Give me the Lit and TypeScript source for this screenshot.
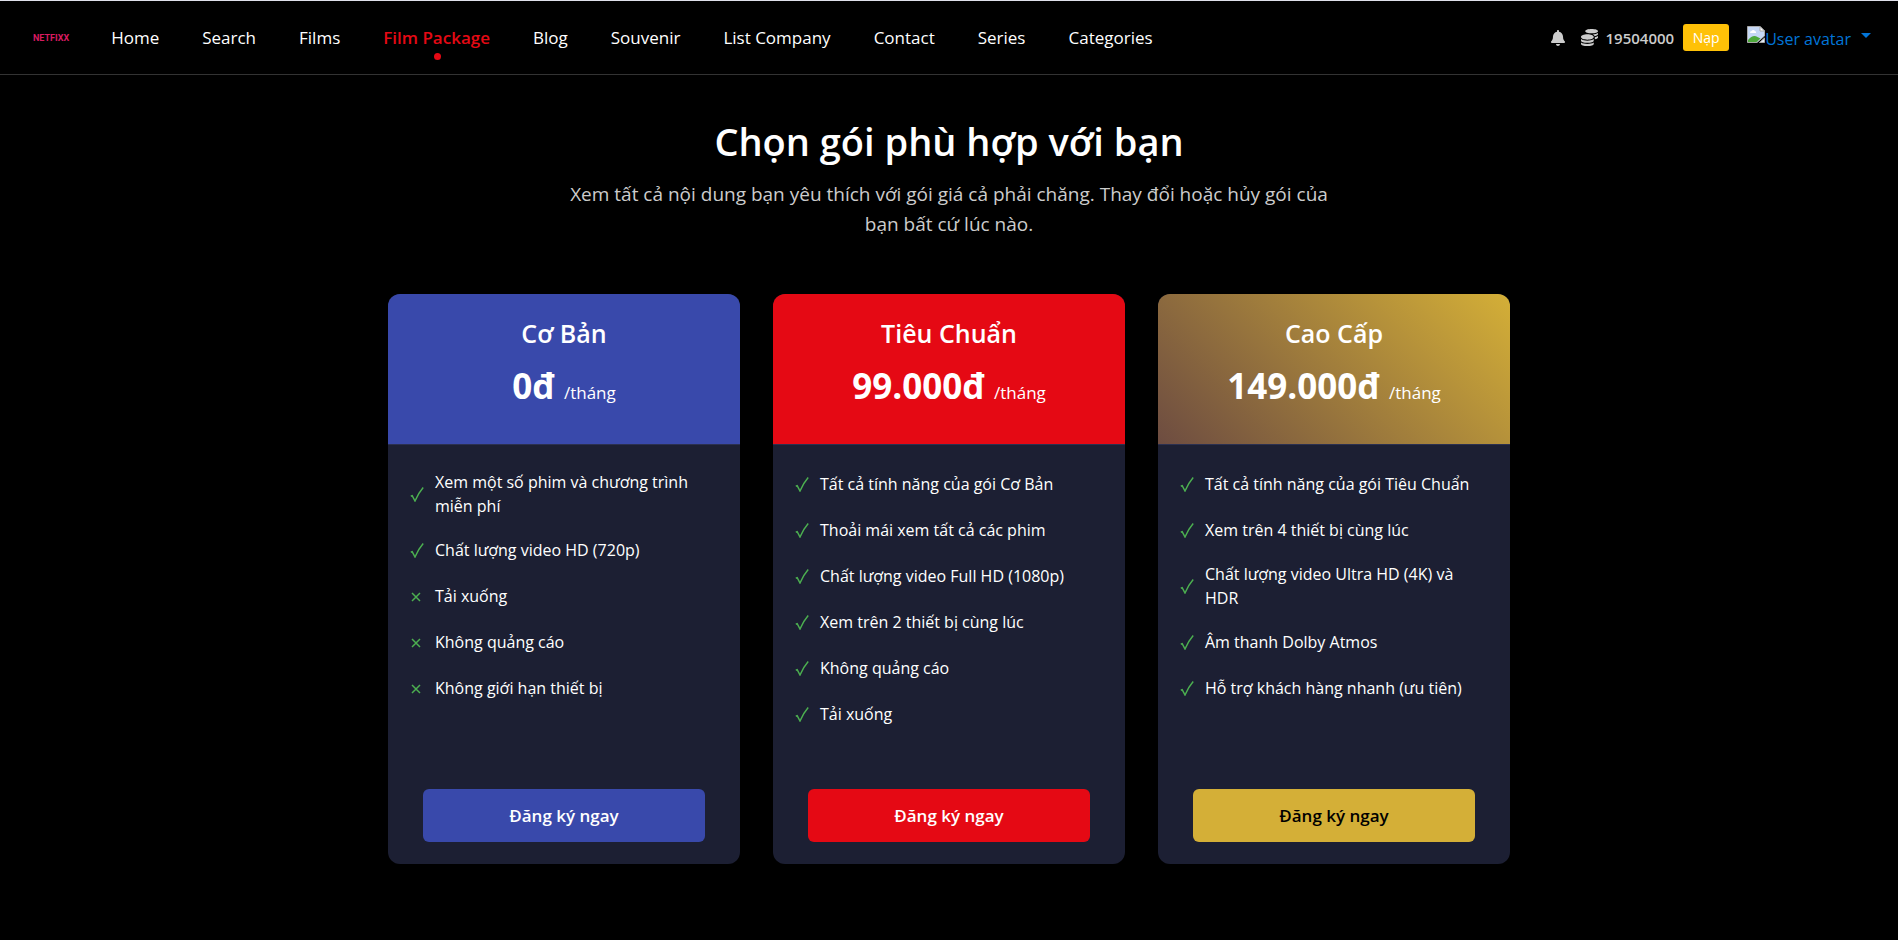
import { LitElement, html, css, svg } from "lit";
import { customElement, property } from "lit/decorators.js";

interface Feature {
  text: string;
  included: boolean;
}

interface Plan {
  id: string;
  name: string;
  price: string;
  features: Feature[];
}

const yes = (text: string): Feature => ({ text, included: true });
const no = (text: string): Feature => ({ text, included: false });

const PLANS: Plan[] = [
  {
    id: "basic",
    name: "Cơ Bản",
    price: "0đ",
    features: [
      yes("Xem một số phim và chương trình miễn phí"),
      yes("Chất lượng video HD (720p)"),
      no("Tải xuống"),
      no("Không quảng cáo"),
      no("Không giới hạn thiết bị"),
    ],
  },
  {
    id: "standard",
    name: "Tiêu Chuẩn",
    price: "99.000đ",
    features: [
      yes("Tất cả tính năng của gói Cơ Bản"),
      yes("Thoải mái xem tất cả các phim"),
      yes("Chất lượng video Full HD (1080p)"),
      yes("Xem trên 2 thiết bị cùng lúc"),
      yes("Không quảng cáo"),
      yes("Tải xuống"),
    ],
  },
  {
    id: "premium",
    name: "Cao Cấp",
    price: "149.000đ",
    features: [
      yes("Tất cả tính năng của gói Tiêu Chuẩn"),
      yes("Xem trên 4 thiết bị cùng lúc"),
      yes("Chất lượng video Ultra HD (4K) và HDR"),
      yes("Âm thanh Dolby Atmos"),
      yes("Hỗ trợ khách hàng nhanh (ưu tiên)"),
    ],
  },
];

const LINKS = [
  "Home",
  "Search",
  "Films",
  "Film Package",
  "Blog",
  "Souvenir",
  "List Company",
  "Contact",
  "Series",
  "Categories",
];

const checkMark = svg`<path d="M0.800 9.200 L2.200 8.600 L5 14 Q8.500 6 13.200 0.600" fill="none" stroke="currentColor" stroke-width="1.500"/>`;
const crossMark = svg`<path d="M2 4 L10 12 M10 4 L2 12" fill="none" stroke="currentColor" stroke-width="1.500"/>`;

@customElement("site-header")
class SiteHeader extends LitElement {
  static styles = css`
    :host {
      display: block;
    }
    .bar {
      display: flex;
      align-items: center;
      justify-content: space-between;
      min-height: 75px;
      box-sizing: border-box;
      padding: 0 27px 0 33px;
      border-top: 1px solid #dfe0ea;
      border-bottom: 1px solid #333;
    }
    .nav,
    .links,
    .account {
      display: flex;
      align-items: center;
    }
    .nav {
      gap: 42px;
    }
    .logo {
      color: #d81b60;
      font: 700 9px/12px Roboto, "Liberation Sans", sans-serif;
      text-decoration: none;
    }
    .links {
      gap: 43px;
      margin: 0;
      padding: 0;
      list-style: none;
    }
    .link {
      position: relative;
      display: block;
      color: #fff;
      font-size: 17px;
      line-height: 26px;
      text-decoration: none;
      white-space: nowrap;
    }
    .link.active {
      color: #e50914;
      font-weight: 600;
    }
    .link.active::after {
      content: "";
      position: absolute;
      top: 28px;
      left: calc(50% - 3px);
      width: 7px;
      height: 7px;
      border-radius: 50%;
      background: #e50914;
    }
    .account {
      color: #ccc;
      white-space: nowrap;
    }
    .icon-button,
    .user {
      display: flex;
      align-items: center;
      padding: 0;
      border: 0;
      background: none;
      color: inherit;
      font: inherit;
    }
    .coins {
      margin: 0 8px 0 16px;
    }
    .balance {
      font-size: 15px;
      font-weight: 600;
    }
    .topup {
      margin: 0 18px 0 9px;
      width: 46px;
      height: 27px;
      padding: 0;
      border: 0;
      border-radius: 3px;
      background: #ffc107;
      color: #fff;
      font: inherit;
      font-size: 14px;
    }
    .user {
      padding-top: 2px;
      color: #0275d8;
      font-size: 16px;
      line-height: 26px;
    }
    .broken {
      margin-bottom: 8px;
    }
    .caret {
      margin: 0 0 6px 10px;
      border: 5px solid transparent;
      border-top-color: currentColor;
      border-bottom: 0;
    }
  `;

  render() {
    return html`
      <header class="bar">
        <nav class="nav" aria-label="Main">
          <a class="logo" href="#">NETFIXX</a>
          <ul class="links">
            ${LINKS.map(
              (label) => html`<li>
                <a class="link ${label === "Film Package" ? "active" : ""}" href="#">${label}</a>
              </li>`
            )}
          </ul>
        </nav>
        <div class="account">
          <button class="icon-button" type="button" aria-label="Notifications">
            <svg width="14" height="16" viewBox="0 0 448 512" fill="currentColor">
              <path
                d="M224 512c35.300 0 63.970-28.650 63.970-64H160.030c0 35.350 28.670 64 63.970 64zm215.390-149.710c-19.320-20.760-55.470-51.990-55.470-154.290 0-77.700-54.480-139.900-127.940-155.160V32c0-17.670-14.320-32-31.980-32s-31.980 14.330-31.980 32v20.840C118.560 68.100 64.080 130.300 64.080 208c0 102.300-36.150 133.530-55.470 154.290-6 6.450-8.660 14.160-8.610 21.710.11 16.400 12.980 32 32.100 32h383.800c19.120 0 32-15.600 32.100-32 .05-7.550-2.610-15.270-8.610-21.710z"
              />
            </svg>
          </button>
          <svg class="coins" width="17" height="17" viewBox="0 0 512 512" fill="currentColor" aria-hidden="true">
            <path
              d="M0 405.300V448c0 35.300 86 64 192 64s192-28.700 192-64v-42.700C342.700 434.400 267.200 448 192 448S41.300 434.400 0 405.300zM320 128c106 0 192-28.700 192-64S426 0 320 0 128 28.700 128 64s86 64 192 64zM0 300.400V352c0 35.300 86 64 192 64s192-28.700 192-64v-51.600c-41.300 34-116.900 51.600-192 51.600S41.300 334.400 0 300.400zm416 11c57.300-11.100 96-31.700 96-55.400v-42.700c-23.200 16.400-57.300 27.600-96 34.500v63.600zM192 160C86 160 0 195.800 0 240s86 80 192 80 192-35.800 192-80-86-80-192-80zm219.300 56.300c60-10.800 100.700-32 100.700-56.300v-42.700c-35.500 25.100-96.500 38.600-160.700 41.800 29.500 14.300 51.200 33.500 60 57.200z"
            />
          </svg>
          <span class="balance">19504000</span>
          <button class="topup" type="button">Nạp</button>
          <button class="user" type="button" aria-haspopup="menu">
            <svg class="broken" width="18" height="17" viewBox="0 0 18 17" aria-hidden="true">
              <path d="M0.500 0.500 H13 L17.500 5 V10 L10 16.500 H0.500 Z" fill="#c6d8f5" stroke="#a8a8a8" />
              <path d="M13 0.500 V5 H17.500 Z" fill="#fff" stroke="#a8a8a8" />
              <path d="M3 6.500 a1.500 1.500 0 0 1 1.500-1.500 a2 2 0 0 1 3.500 0 a1.500 1.500 0 0 1 1 2 H3.500 Z" fill="#fff" />
              <path d="M1 16 V14 Q6 8 10.500 11 L13.500 12.500 L9.500 16 Z" fill="#4ea93b" />
              <path d="M12.500 16.500 L17.500 12 V16.500 Z" fill="#e4ecf8" stroke="#a8a8a8" />
            </svg>
            <span>User avatar</span>
            <span class="caret"></span>
          </button>
        </div>
      </header>
    `;
  }
}

@customElement("plan-card")
class PlanCard extends LitElement {
  @property({ attribute: false }) plan!: Plan;

  static styles = css`
    :host {
      display: flex;
    }
    .card {
      display: flex;
      flex: 1;
      flex-direction: column;
      overflow: hidden;
      border-radius: 12px;
      background: #1c1f33;
      color: #fff;
    }
    .head {
      padding: 22px 22px 31px;
      text-align: center;
    }
    .name {
      margin: 0 0 16px;
      font-size: 25px;
      font-weight: 600;
      line-height: 34px;
    }
    .cost {
      display: flex;
      align-items: baseline;
      justify-content: center;
      gap: 9px;
      margin: 0;
      font-size: 17px;
      line-height: 40px;
    }
    .price {
      font-size: 35px;
      font-weight: 700;
    }
    .features {
      flex: 1;
      margin: 0;
      padding: 16px 22px 52px;
      border-top: 1px solid #2b3050;
      list-style: none;
    }
    .feature {
      display: flex;
      align-items: center;
      gap: 11px;
      min-height: 28px;
      padding: 9px 0;
      font-size: 16px;
      line-height: 24px;
    }
    .mark {
      flex: none;
      color: #4caf50;
    }
    .action {
      align-self: center;
      width: 80%;
      min-height: 53px;
      margin-bottom: 22px;
      border: 0;
      border-radius: 6px;
      color: #fff;
      font: inherit;
      font-size: 17px;
      font-weight: 600;
    }
    .basic .head,
    .basic .action {
      background: #3949ab;
    }
    .standard .head,
    .standard .action {
      background: #e50914;
    }
    .premium .head {
      background: linear-gradient(45deg, #6d4c41, #d4af37);
    }
    .premium .action {
      background: #d4af37;
      color: #000;
    }
  `;

  render() {
    const { id, name, price, features } = this.plan;
    return html`
      <article class="card ${id}">
        <header class="head">
          <h2 class="name">${name}</h2>
          <p class="cost"><span class="price">${price}</span><span>/tháng</span></p>
        </header>
        <ul class="features">
          ${features.map(
            ({ text, included }) => html`<li class="feature">
              <svg class="mark" width="14" height="15" viewBox="0 0 14 15" aria-hidden="true">
                ${included ? checkMark : crossMark}
              </svg>
              <span>${text}</span>
            </li>`
          )}
        </ul>
        <button class="action" type="button">Đăng ký ngay</button>
      </article>
    `;
  }
}

@customElement("app-root")
class AppRoot extends LitElement {
  static styles = css`
    :host {
      display: block;
      min-height: 100vh;
      background: #000;
      color: #fff;
      font-family: "Segoe UI", "Open Sans", "Noto Sans", sans-serif;
    }
    .intro {
      max-width: 780px;
      margin: 0 auto;
      padding: 41px 16px 0;
      text-align: center;
    }
    .title {
      margin: 0 0 13px;
      font-size: 38px;
      font-weight: 600;
      line-height: 50px;
    }
    .lead {
      margin: 0;
      color: #ccc;
      font-size: 19px;
      line-height: 30px;
    }
    .plans {
      display: grid;
      grid-template-columns: repeat(auto-fit, minmax(280px, 1fr));
      gap: 33px;
      max-width: 1122px;
      margin: 0 auto;
      padding: 55px 16px 76px;
    }
  `;

  render() {
    return html`
      <site-header></site-header>
      <main>
        <section class="intro">
          <h1 class="title">Chọn gói phù hợp với bạn</h1>
          <p class="lead">
            Xem tất cả nội dung bạn yêu thích với gói giá cả phải chăng. Thay đổi hoặc hủy gói của bạn bất cứ lúc nào.
          </p>
        </section>
        <section class="plans">
          ${PLANS.map((plan) => html`<plan-card .plan=${plan}></plan-card>`)}
        </section>
      </main>
    `;
  }
}
